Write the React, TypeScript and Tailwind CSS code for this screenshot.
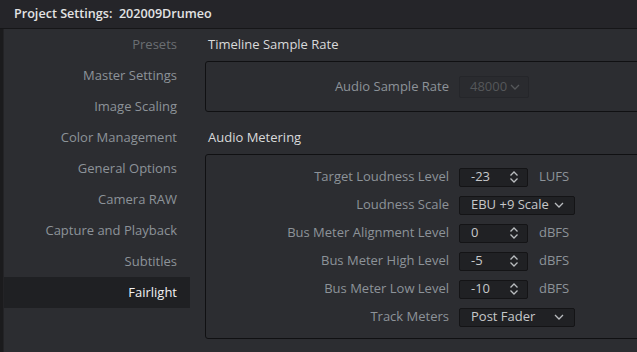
import React from "react"

const sections = [
  "Presets",
  "Master Settings",
  "Image Scaling",
  "Color Management",
  "General Options",
  "Camera RAW",
  "Capture and Playback",
  "Subtitles",
  "Fairlight",
]

function UpDown() {
  return (
    <svg width="10" height="14" viewBox="0 0 10 14" fill="none" stroke="#b9bcbf" strokeWidth="1.3">
      <path d="M1.5 5.5 L5 2 L8.5 5.5" />
      <path d="M1.5 8.5 L5 12 L8.5 8.5" />
    </svg>
  )
}

function Chevron({ color = "#b9bcbf" }: { color?: string }) {
  return (
    <svg width="10" height="6" viewBox="0 0 10 6" fill="none" stroke={color} strokeWidth="1.3">
      <path d="M1 1 L5 5 L9 1" />
    </svg>
  )
}

function Spin({ value }: { value: string }) {
  return (
    <div className="flex items-center justify-between w-[69px] h-[19px] pl-[11px] pr-[8px] bg-[#202124] border border-[#141416] rounded-[2px] text-[#c6c8ca]">
      <span>{value}</span>
      <UpDown />
    </div>
  )
}

function Select({ value }: { value: string }) {
  return (
    <div className="flex items-center justify-between w-[116px] h-[19px] pl-[11px] pr-[10px] bg-[#202124] border border-[#141416] rounded-[2px] text-[#c6c8ca]">
      <span>{value}</span>
      <Chevron />
    </div>
  )
}

function Row({ label, children, unit }: { label: string; children: React.ReactNode; unit?: string }) {
  return (
    <div className="flex items-center h-[28px]">
      <div className="w-[253px] shrink-0 text-right text-[#8d9399] pr-[10px]">{label}</div>
      {children}
      {unit && <span className="ml-[11px] text-[#8d9399]">{unit}</span>}
    </div>
  )
}

export default function App() {
  return (
    <div
      className="w-[637px] h-[352px] overflow-hidden bg-[#2c2d31] flex flex-col text-[13px]"
      style={{ fontFamily: '"Open Sans", "Noto Sans", sans-serif' }}
    >
      {/* title bar */}
      <div className="h-[29px] shrink-0 bg-[#252529] border-b border-[#161618] flex items-center pl-[14px]">
        <span className="whitespace-pre font-semibold text-[12.6px] text-[#e2e3e4]">Project Settings:  202009Drumeo</span>
      </div>

      <div className="flex flex-1 min-w-0">
        <div className="w-[4px] shrink-0 bg-[#1b1b1d] border-r border-[#232326]" />

        {/* sidebar */}
        <div className="w-[186px] shrink-0 flex flex-col">
          {sections.map((s) => (
            <div
              key={s}
              className={`h-[31px] flex items-center justify-end pr-[13px] ${
                s === "Fairlight"
                  ? "bg-[#1f2023] text-[#f0f1f2]"
                  : s === "Presets"
                  ? "text-[#6b6f73]"
                  : "text-[#8d9399]"
              }`}
            >
              {s}
            </div>
          ))}
        </div>

        {/* content */}
        <div className="flex flex-col pl-[15px] w-[460px] shrink-0">
          <div className="h-[32px] flex items-center pl-[3px] text-[#d9dadb]">Timeline Sample Rate</div>
          <div className="h-[51px] border border-[#101012] rounded-[3px] flex items-center">
            <Row label="Audio Sample Rate">
              <div className="flex items-center justify-between w-[70px] h-[22px] pl-[10px] pr-[8px] border border-[#25262a] bg-[#2a2b2f] rounded-[2px] text-[#55575a]">
                <span>48000</span>
                <Chevron color="#55575a" />
              </div>
            </Row>
          </div>

          <div className="h-[32px] mt-[10px] flex items-center pl-[3px] text-[#d9dadb]">Audio Metering</div>
          <div className="h-[185px] border border-[#101012] rounded-[3px] pt-[8px]">
            <Row label="Target Loudness Level" unit="LUFS">
              <Spin value="-23" />
            </Row>
            <Row label="Loudness Scale">
              <Select value="EBU +9 Scale" />
            </Row>
            <Row label="Bus Meter Alignment Level" unit="dBFS">
              <Spin value="0" />
            </Row>
            <Row label="Bus Meter High Level" unit="dBFS">
              <Spin value="-5" />
            </Row>
            <Row label="Bus Meter Low Level" unit="dBFS">
              <Spin value="-10" />
            </Row>
            <Row label="Track Meters">
              <Select value="Post Fader" />
            </Row>
          </div>
        </div>
      </div>
    </div>
  )
}
